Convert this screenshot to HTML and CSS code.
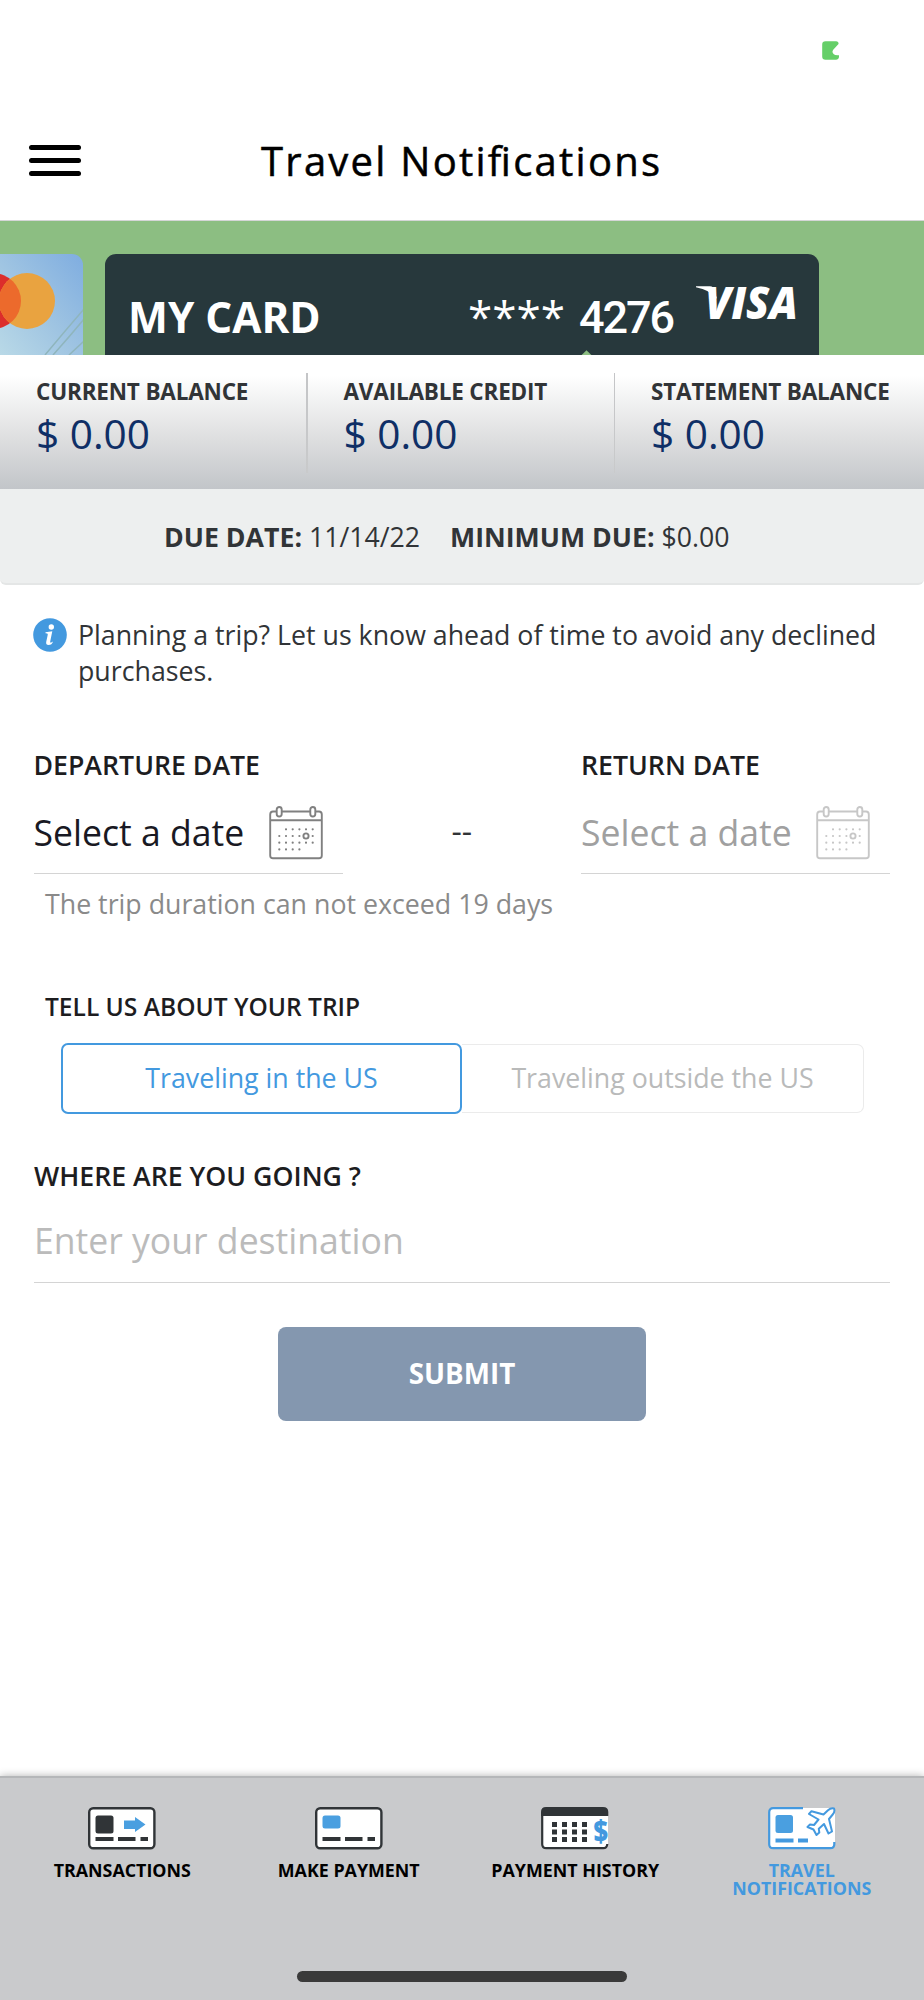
FILE: index.html
```html
<!DOCTYPE html>
<html lang="en">
<head>
<meta charset="utf-8">
<title>Travel Notifications</title>
<link rel="stylesheet" href="styles.css">
</head>
<body>
<div class="app">
  <div class="status-bar">
    <svg class="battery" width="18" height="20" viewBox="0 0 18 20"><path d="M3.500 0.300H14Q17 .8 16.500 3L11 9Q9.500 11 11.500 13Q13 14.500 17 14.200V16Q16.500 18.800 14 18.800H3.500Q.2 18.800 .2 15.500V3.500Q.2.3 3.500.3Z" fill="#65cf68"/></svg>
  </div>
  <header class="header">
    <div class="menu"><span></span><span></span><span></span></div>
    <h1 class="title">Travel Noti<span class="lig">f</span>ications</h1>
  </header>

  <section class="carousel">
    <svg class="card-prev" width="83" height="101" viewBox="0 0 83 101">
      <defs>
        <linearGradient id="sky" x1="1" y1="0" x2="0" y2="1"><stop offset="0" stop-color="#7fade0"/><stop offset=".55" stop-color="#a0c5e2"/><stop offset="1" stop-color="#b9d9e7"/></linearGradient>
        <clipPath id="mc"><circle cx="-7" cy="47" r="28"/></clipPath>
        <clipPath id="pc"><path d="M0 0H72A11 11 0 0 1 83 11V101H0Z"/></clipPath>
      </defs>
      <g clip-path="url(#pc)">
        <rect width="83" height="101" fill="url(#sky)"/>
        <path d="M45 101Q65 77 84 55M53 101Q70 82 84 65M69 101L84 87" stroke="#8fb5bd" stroke-width="1.500" fill="none"/>
        <circle cx="-7" cy="47" r="28" fill="#dc2d2b"/>
        <circle cx="27" cy="47" r="28" fill="#e9a340"/>
        <circle cx="27" cy="47" r="28" fill="#ec6a2c" clip-path="url(#mc)"/>
      </g>
    </svg>
    <div class="card">
      <span class="card-name">MY CARD</span>
      <span class="card-number"><span class="stars">****</span><span class="digits">4276</span></span>
      <svg class="visa" width="106" height="38" viewBox="0 0 106 38">
        <path d="M0 2.300H14Q17.500 2.300 18.500 6L21 15Q14 5.800 0 3.300Z" fill="#fff"/>
        <text class="visa-text" x="9" y="34.500" textLength="93" lengthAdjust="spacingAndGlyphs">VISA</text>
      </svg>
      <i class="notch"></i>
    </div>
  </section>

  <section class="balances">
    <div class="balance"><span class="balance-label">CURRENT BALANCE</span><span class="amount">$ 0.00</span></div>
    <div class="balance"><span class="balance-label">AVAILABLE CREDIT</span><span class="amount">$ 0.00</span></div>
    <div class="balance"><span class="balance-label">STATEMENT BALANCE</span><span class="amount">$ 0.00</span></div>
  </section>
  <section class="due">
    <span><b>DUE DATE:</b> 11/14/22</span>
    <span><b>MINIMUM DUE:</b> $0.00</span>
  </section>

  <main class="form">
    <div class="info">
      <svg width="34" height="34" viewBox="0 0 34 34"><circle cx="17" cy="17" r="16.800" fill="#4399df"/><circle cx="18.300" cy="9" r="2.700" fill="#fff"/><path d="M12.500 14.200Q16 13.800 19.300 13.300L17.200 23.500Q17 25 18.200 24.500L20 23.500Q19 27 15.500 27Q12.700 27 13.200 24L14.800 16.500Q15 15.200 12.500 15.200Z" fill="#fff"/></svg>
      <p>Planning a trip? Let us know ahead of time to avoid any declined purchases.</p>
    </div>

    <div class="dates">
      <div class="date">
        <label class="label">DEPARTURE DATE</label>
        <div class="picker">
          <span>Select a date</span>
          <svg class="calendar" width="54" height="54" viewBox="0 0 54 54"><use href="#cal"/></svg>
        </div>
      </div>
      <span class="dash">--</span>
      <div class="date date-off">
        <label class="label">RETURN DATE</label>
        <div class="picker">
          <span>Select a date</span>
          <svg class="calendar" width="54" height="54" viewBox="0 0 54 54">
            <defs><g id="cal" fill="none" stroke="currentColor" stroke-width="1.900">
              <path d="M7.500 5.500H4Q1.200 5.500 1.200 8.500V49.500Q1.200 52.300 4 52.300H50Q52.800 52.300 52.800 49.500V8.500Q52.800 5.500 50 5.500H46.500M13 5.500H41M1.200 14.300H52.800"/>
              <rect x="7.700" y="1" width="5" height="9.500" rx="2.500"/><rect x="41.300" y="1" width="5" height="9.500" rx="2.500"/>
              <circle cx="37" cy="30" r="2.600"/>
              <path stroke-width="2.200" stroke-linecap="round" d="M17 23.300h.01M23.700 23.300h.01M30.400 23.300h.01M37 23.300h.01M43.700 23.300h.01M10.300 30h.01M17 30h.01M23.700 30h.01M30.400 30h.01M43.700 30h.01M10.300 36.700h.01M17 36.700h.01M23.700 36.700h.01M30.400 36.700h.01M37 36.700h.01M43.700 36.700h.01M10.300 43.400h.01M17 43.400h.01M23.700 43.400h.01M30.400 43.400h.01"/>
            </g></defs>
            <use href="#cal"/>
          </svg>
        </div>
      </div>
    </div>
    <p class="hint">The trip duration can not exceed 19 days</p>

    <h2 class="about">TELL US ABOUT YOUR TRIP</h2>
    <div class="toggle">
      <button class="option option-on">Traveling in the US</button>
      <button class="option">Traveling outside the US</button>
    </div>

    <label class="label where">WHERE ARE YOU GOING ?</label>
    <div class="destination">Enter your destination</div>
    <button class="submit">SUBMIT</button>
  </main>

  <nav class="tabs">
    <div class="tab-row">
      <div class="tab">
        <svg width="68" height="43" viewBox="0 0 68 43"><rect x="1.200" y="1.200" width="65.200" height="40" rx="4" fill="#fff" stroke="#303437" stroke-width="2.400"/><rect x="7.500" y="8.500" width="18" height="18" rx="2.500" fill="#303437"/><path d="M36 13.500H47V10L57.500 17.500L47 25V22H36Z" fill="#4a9fe0"/><path d="M7.500 32h18M30 32h17.500M52.500 32h7.500" stroke="#303437" stroke-width="4"/></svg>
        <span>TRANSACTIONS</span>
      </div>
      <div class="tab">
        <svg width="68" height="43" viewBox="0 0 68 43"><rect x="1.200" y="1.200" width="65.200" height="40" rx="4" fill="#fff" stroke="#303437" stroke-width="2.400"/><rect x="7.500" y="8.500" width="18" height="13" rx="2.500" fill="#4a9fe0"/><path d="M7.500 32h18M30 32h17.500M52.500 32h7.500" stroke="#303437" stroke-width="4"/></svg>
        <span>MAKE PAYMENT</span>
      </div>
      <div class="tab">
        <svg width="68" height="43" viewBox="0 0 68 43"><path d="M2 4H67V37L62 41H5L2 38Z" fill="#fff"/><path d="M66.300 37Q66 41.200 62.300 41.200H5.200Q1.200 41.200 1.200 37.200V5" fill="none" stroke="#303437" stroke-width="2.200"/><path d="M0 9V5Q0 0 5 0H62Q67.300 0 67.300 5V9Z" fill="#303437"/><path d="M11 17.500H47M11 25H47M11 32.500H47" stroke="#303437" stroke-width="5" stroke-dasharray="5 5"/><text class="dollar" x="52.500" y="34.500" textLength="14.500" lengthAdjust="spacingAndGlyphs">$</text></svg>
        <span>PAYMENT HISTORY</span>
      </div>
      <div class="tab tab-on">
        <svg width="68" height="43" viewBox="0 0 68 43"><path d="M4 1H67V37L63 41H4L1 38V4Z" fill="#fff"/><path d="M35 1.200H5.200Q1.200 1.200 1.200 5.200V37.200Q1.200 41.200 5.200 41.200H62.300Q66.300 41.200 66.300 37.200V35" fill="none" stroke="#4399df" stroke-width="2.200"/><rect x="7.500" y="8" width="17.500" height="18" rx="2.500" fill="#4a9fe0"/><path d="M7.500 33.500h18M30 33.500h10" stroke="#4399df" stroke-width="4"/><path d="M66 1.500Q63 .6 60 3.200L55.500 7.500L43.500 4.200L41 7L50.500 12.500L46 18L42 17.500L39.500 20L45.500 22.500L48.500 28L51.300 25.500L50.800 21.800L56 17L60.500 26.500L64 24.500L61 12L64.700 7.500Q67.300 4.500 66 1.500Z" fill="#fff" stroke="#4399df" stroke-width="2" stroke-linejoin="round"/></svg>
        <span>TRAVEL<br>NOTIFICATIONS</span>
      </div>
    </div>
    <div class="home-bar"></div>
  </nav>
</div>
</body>
</html>
```
FILE: styles.css
```css
* { box-sizing: border-box; margin: 0; padding: 0; }
body { font-family: "Open Sans", "Noto Sans", sans-serif; background: #fff; color: #313437; }
svg { display: block; flex: none; }
button { font: inherit; border: 0; background: none; }
.app { width: 924px; height: 2000px; display: flex; flex-direction: column; overflow: hidden; }
.status-bar { height: 101px; padding: 41px 0 0 822px; }
.header { height: 120px; border-bottom: 1px solid #d5d6d7; display: flex; padding-left: 29px; }
.menu { width: 52px; display: flex; flex-direction: column; gap: 8px; padding-top: 44px; }
.menu span { height: 5px; border-radius: 3px; background: #000; }
.title { margin: 32px 0 0 180px; font-size: 40px; line-height: 56px; font-weight: 400; color: #000; letter-spacing: 2.25px; white-space: nowrap; -webkit-text-stroke: .5px #000; }
.lig { letter-spacing: -0.5px; }

.carousel { height: 134px; background: #8cbe82; padding-top: 33px; display: flex; gap: 22px; overflow: hidden; }
.card { width: 714px; height: 101px; border-radius: 11px 11px 0 0; background: #27383c; color: #fff; display: flex; align-items: flex-start; position: relative; padding-left: 23px; white-space: nowrap; }
.card-name { width: 341px; font-size: 42.3px; line-height: 56px; font-weight: 700; padding-top: 35px; }
.card-number { width: 225px; display: flex; align-items: baseline; padding-top: 34px; line-height: 56px; }
.stars { width: 111px; font-size: 44px; margin-left: -1px; }
.digits { font-family: Roboto, sans-serif; font-size: 45px; font-weight: 500; letter-spacing: -2.1px; }
.visa { margin: 30px 0 0 2px; }
.visa-text { font-family: "Open Sans", sans-serif; font-size: 45px; font-weight: 800; font-style: italic; fill: #fff; }
.notch { position: absolute; left: 477px; bottom: -6px; width: 9px; height: 9px; background: #8cbe82; transform: rotate(45deg); }

.balances { height: 134px; display: grid; grid-template-columns: repeat(3, 307.5px); background: linear-gradient(#fff 15%, #dcddde 65%, #c2c5c9); }
.balance { padding: 21px 0 0 36px; white-space: nowrap; background: linear-gradient(#c4c5c7, #c9cacb) no-repeat 306px 18px / 2px 100px; }
.balance:last-child { background: none; }
.balance-label { display: block; font-size: 22.5px; line-height: 32px; font-weight: 700; letter-spacing: -.18px; }
.amount { display: block; font-size: 40.6px; line-height: 52px; color: #0f2f66; }
.due { height: 96px; background: #edefef; border-bottom: 2px solid #e4e6e6; border-radius: 0 0 6px 6px; display: flex; gap: 30px; padding: 29px 0 0 164px; font-size: 26.7px; line-height: 38px; white-space: nowrap; }

.form { flex: 1; padding: 33px 34px 0; }
.info { display: flex; gap: 11px; font-size: 26.75px; line-height: 36px; margin-left: -1px; }
.info p { margin-top: -1px; }
.dates { display: flex; justify-content: space-between; margin-top: 57px; margin-left: -.5px; }
.date { width: 309px; }
.label { display: block; font-size: 26.7px; line-height: 38px; font-weight: 600; color: #1d1d1f; }
.picker { display: flex; align-items: center; justify-content: space-between; height: 90px; border-bottom: 1px solid #d4d4d4; padding: 6px 20px 0 0; font-size: 35.6px; color: #191923; white-space: nowrap; }
.calendar { color: #808080; margin-top: 2px; }
.date-off .picker { color: #a0a0a0; }
.date-off .calendar { color: #c7c7c7; }
.dash { font-size: 32px; line-height: 44px; margin-top: 63px; }
.hint { margin: 12px 0 0 11px; font-size: 26.75px; line-height: 36px; color: #8a8a8a; }
.about { margin: 67px 0 0 11px; font-size: 24.55px; line-height: 36px; font-weight: 600; color: #1d1d1f; }
.toggle { display: flex; margin: 17px 26px 0 27px; height: 72px; align-items: center; }
.option { flex: 1; height: 69px; border: 1px solid #ebebeb; border-left: 0; border-radius: 0 7px 7px 0; font-size: 26.75px; color: #b9baba; padding-bottom: 1px; }
.option-on { flex: 0 0 401px; height: 71px; border: 2px solid #4399df; border-radius: 7px; color: #4399df; }
.where { margin-top: 43px; font-size: 26.7px; }
.destination { height: 88px; border-bottom: 1px solid #d4d4d4; padding-top: 21px; font-size: 35.6px; line-height: 48px; color: #bbb; }
.submit { display: block; width: 368px; height: 94px; margin: 44px auto 0; border-radius: 8px; background: #8497af; color: #fff; font-size: 27.8px; font-weight: 700; padding-bottom: 3px; }

.tabs { height: 224px; background: #c9cacc; border-top: 2px solid #b5b7b9; box-shadow: 0 0 8px rgba(0,0,0,.3); padding: 29px 9px 0; }
.tab-row { display: grid; grid-template-columns: repeat(4, 1fr); height: 164px; }
.tab { display: flex; flex-direction: column; align-items: center; gap: 11px; font-size: 17.85px; line-height: 18px; font-weight: 700; color: #000; text-align: center; white-space: nowrap; }
.tab-on { color: #4399df; }
.dollar { font-size: 30px; font-weight: 800; fill: #4399df; }
.home-bar { width: 330px; height: 11px; margin: 0 auto; border-radius: 6px; background: #3a3a3a; }
```
